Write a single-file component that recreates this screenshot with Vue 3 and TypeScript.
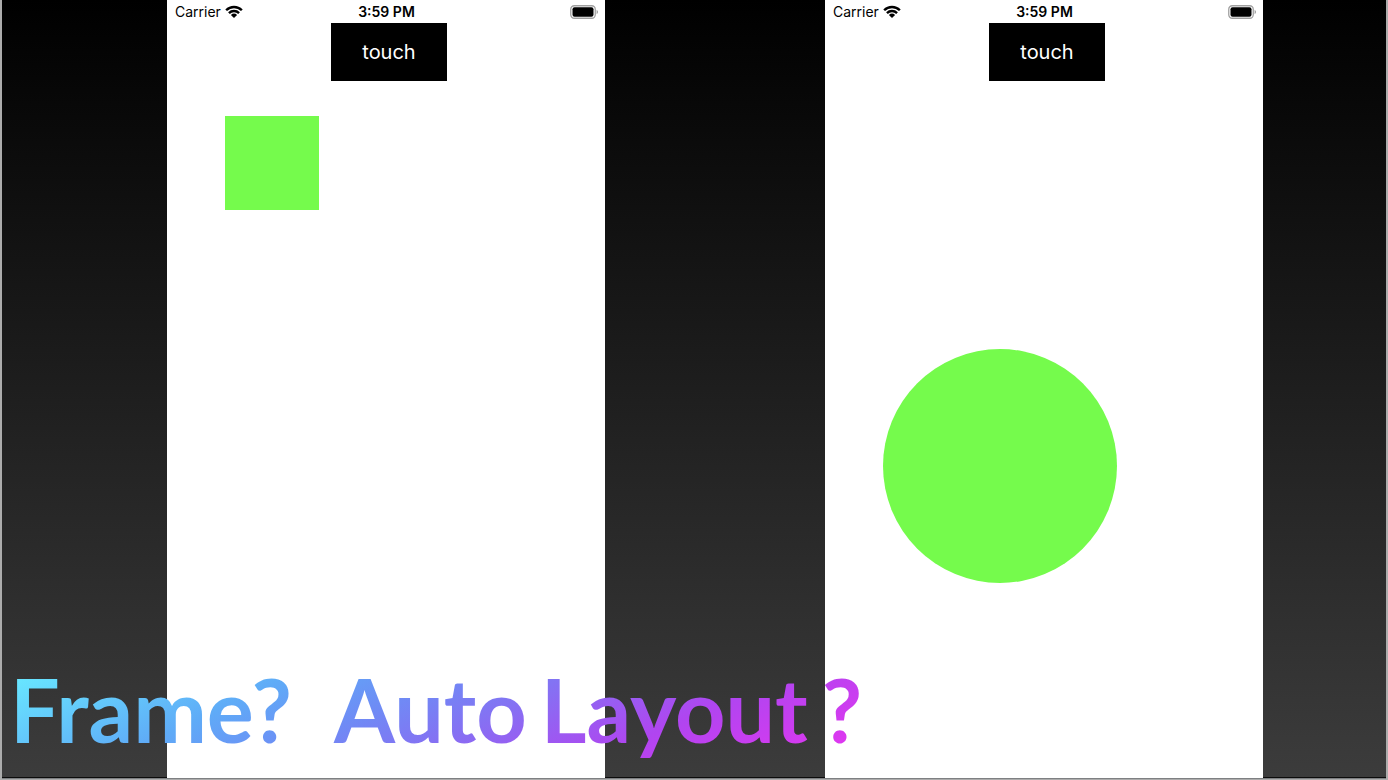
<script setup lang="ts">
interface Screen {
  id: string
  shape: 'square' | 'circle'
}

const screens: Screen[] = [
  { id: 'frame', shape: 'square' },
  { id: 'auto-layout', shape: 'circle' },
]
</script>

<template>
  <main class="stage">
    <div class="screens">
      <section v-for="screen in screens" :key="screen.id" class="phone">
        <header class="status">
          <div class="carrier">
            <span>Carrier</span>
            <svg class="wifi" viewBox="0 0 18 13" aria-hidden="true">
              <path d="M0.3 4.4A12.4 12.4 0 0 1 17.7 4.4L16 6.1A10 10 0 0 0 2 6.1Z" />
              <path d="M3.1 7.2A8.4 8.4 0 0 1 14.9 7.2L13.2 8.9A6 6 0 0 0 4.8 8.9Z" />
              <path d="M5.9 10A4.5 4.5 0 0 1 12.1 10L9 13Z" />
            </svg>
          </div>
          <time class="clock">3:59 PM</time>
          <svg class="battery" viewBox="0 0 28 14" aria-hidden="true">
            <rect x="0.75" y="0.75" width="24.5" height="12.5" rx="3.5" fill="#fff" stroke="#a0a0a0" stroke-width="1.3" />
            <rect x="2.5" y="2.3" width="21" height="9.4" rx="2" fill="#000" />
            <path d="M26.6 4.8Q28 5.5 28 7Q28 8.5 26.6 9.2Z" fill="#999" />
          </svg>
        </header>
        <button type="button" class="touch">touch</button>
        <div class="shape" :class="screen.shape"></div>
      </section>
    </div>
    <h1 class="title"><span class="first">Frame?</span><span>Auto</span><span>Layout</span><span>?</span></h1>
  </main>
</template>

<style>
body {
  margin: 0;
  background: #acacac;
}
</style>

<style scoped>
.stage {
  position: relative;
  box-sizing: border-box;
  min-height: 100vh;
  display: grid;
  padding: 0 2px 1px;
  background: #acacac;
}

.screens {
  display: grid;
  grid-template-columns: 165fr 438fr 220fr 438fr 123fr;
  border-bottom: 1px solid #7e8082;
  background: linear-gradient(#000, #3c3c3c);
  box-shadow: inset 0 -1px #0c0c0c;
}

.phone {
  grid-column: 2;
  background: #fff;
  font-family: Inter, "Liberation Sans", sans-serif;
  color: #000;
}

.phone + .phone {
  grid-column: 4;
}

.status {
  display: grid;
  grid-template-columns: 1fr auto 1fr;
  align-items: center;
  height: 23px;
  padding: 0 7px 0 8px;
  font-size: 14px;
  line-height: 20px;
}

.carrier {
  display: flex;
  align-items: center;
  gap: 4px;
}

.wifi {
  width: 18px;
  height: 13px;
}

.clock {
  font-weight: 600;
}

.battery {
  width: 28px;
  height: 14px;
  justify-self: end;
}

.touch {
  display: block;
  width: 116px;
  height: 58px;
  margin: 0 0 0 164px;
  padding: 0;
  border: 0;
  background: #000;
  color: #fff;
  font: 400 20px/58px Inter, "Liberation Sans", sans-serif;
}

.shape {
  margin-left: 58px;
  background: #75fb4c;
}

.square {
  width: 94px;
  height: 94px;
  margin-top: 35px;
}

.circle {
  width: 234px;
  height: 234px;
  margin-top: 268px;
  border-radius: 50%;
}

.title {
  position: absolute;
  left: 10px;
  bottom: 18px;
  display: flex;
  gap: 14px;
  margin: 0;
  background: linear-gradient(155deg, #68e6ff 5%, #5fabf7 30%, #6e8cf5 44%, #8472f3 56%, #b045f0 75%, #dc38f0 94%);
  background-clip: text;
  -webkit-background-clip: text;
  color: transparent;
  font: 700 88px/106px Lato, "Open Sans", sans-serif;
  white-space: nowrap;
}

.first {
  margin-right: 28px;
}
</style>
